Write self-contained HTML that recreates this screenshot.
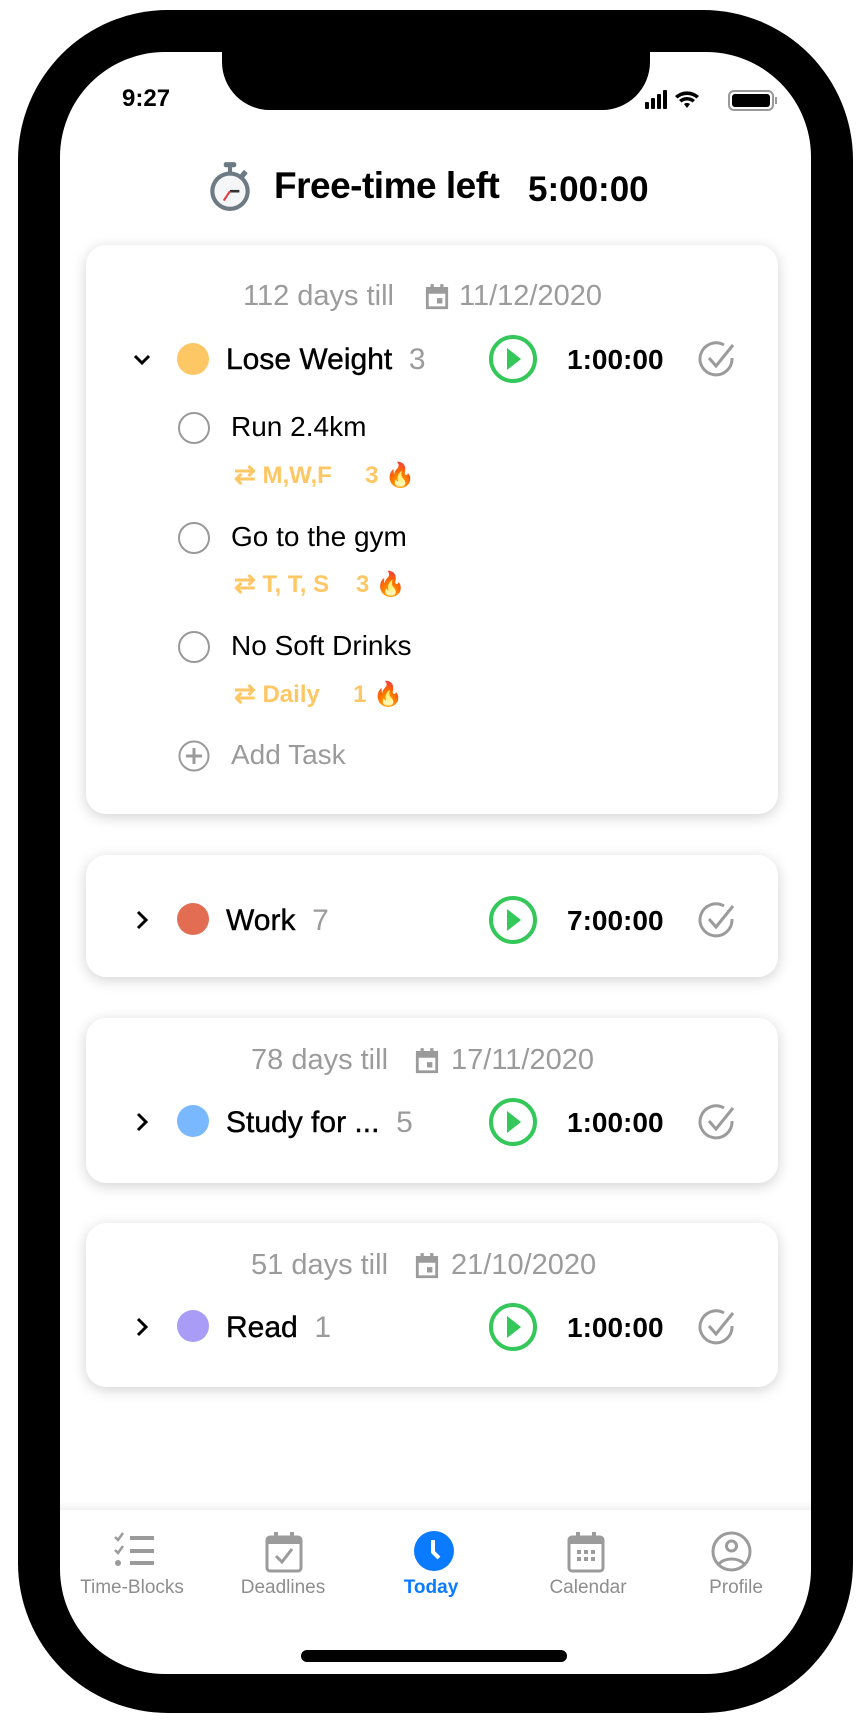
<!DOCTYPE html>
<html><head><meta charset="utf-8"><style>
*{margin:0;padding:0;box-sizing:border-box}
body{width:868px;height:1733px;background:#fff;position:relative;overflow:hidden;font-family:"Liberation Sans",Arial,sans-serif}
.a{position:absolute}
.phone{left:18px;top:10px;width:835px;height:1703px;background:#000;border-radius:150px}
.screen{left:60px;top:52px;width:751px;height:1622px;background:#fff;border-radius:105px;overflow:hidden}
.notch{left:222px;top:40px;width:428px;height:70px;background:#000;border-radius:0 0 48px 48px}
.card{left:86px;width:692px;background:#fff;border-radius:20px;box-shadow:0 3px 14px rgba(0,0,0,0.18)}
.date{color:#9b9b9b;font-size:29px;white-space:nowrap}
.row{font-size:30px;white-space:nowrap}
.name{color:#000;-webkit-text-stroke:0.4px #000}
.cnt{color:#9b9b9b}
.time{font-weight:bold;font-size:28px;color:#000}
.task{font-size:28px;color:#000}
.sub{font-size:24px;font-weight:bold;color:#fdc765;white-space:nowrap}
.dot{width:32px;height:32px;border-radius:50%}
.tc{width:32px;height:32px;border-radius:50%;border:2px solid #999}
.tab{font-size:19px;color:#8e8e8e;text-align:center;width:160px}
</style></head><body>
<div class="a phone"></div>
<div class="a screen"></div>
<div class="a notch" style="top:40px"></div>
<div class="a" style="left:122px;top:85px;font-size:24px;font-weight:bold">9:27</div>
<svg class="a" style="left:645px;top:88px" width="135" height="24" viewBox="0 0 135 24">
<rect x="0" y="14" width="4" height="7" rx="1"/><rect x="6" y="10" width="4" height="11" rx="1"/><rect x="12" y="6" width="4" height="15" rx="1"/><rect x="18" y="2" width="4" height="19" rx="1"/>
<path d="M42 20l-3-4a5 5 0 0 1 6 0z M34 12a12 12 0 0 1 16 0l-2.5 2.5a8.5 8.5 0 0 0-11 0z M30 8a18 18 0 0 1 24 0l-2.5 2.5a14.5 14.5 0 0 0-19 0z"/>
<rect x="84" y="3" width="44" height="19" rx="5" fill="none" stroke="#999" stroke-width="2"/><rect x="87" y="6" width="38" height="13" rx="3"/><rect x="130" y="9" width="2" height="7" fill="#999"/>
</svg>
<svg class="a" style="left:206px;top:160px" width="48" height="52" viewBox="0 0 44 50">
<rect x="16" y="2" width="12" height="5" rx="2" fill="#6d7a83"/><rect x="20" y="6" width="4" height="6" fill="#6d7a83"/>
<circle cx="22" cy="30" r="19" fill="#6d7a83"/><circle cx="22" cy="30" r="15" fill="#f4f6f7"/>
<path d="M22 30h9" stroke="#333" stroke-width="2.5"/><path d="M22 30l-6 9" stroke="#e23b3b" stroke-width="2"/>
<rect x="33" y="10" width="5" height="6" rx="1" fill="#6d7a83" transform="rotate(40 35 13)"/>
</svg>
<div class="a" style="left:274px;top:165px;font-size:37px;font-weight:bold;letter-spacing:-0.5px">Free-time left</div>
<div class="a" style="left:528px;top:170px;font-size:35px;font-weight:bold">5:00:00</div>

<div class="a card" style="top:245px;height:569px"></div>
<div class="a date" style="left:243px;top:280px">112 days till</div>
<svg class="a" style="left:424px;top:283px" width="26" height="28" viewBox="0 0 24 26"><path d="M3 5h18v18H3z" fill="none" stroke="#9b9b9b" stroke-width="2.6"/><path d="M3 5h18v5H3z M6 1h3v5H6z M15 1h3v5h-3z M12 14h5v5h-5z" fill="#9b9b9b"/></svg>
<div class="a date" style="left:459px;top:280px">11/12/2020</div>

<svg class="a" style="left:132px;top:352px" width="20" height="16" viewBox="0 0 20 16"><path d="M3 4l7 7 7-7" fill="none" stroke="#000" stroke-width="3"/></svg>

<div class="a dot" style="left:177px;top:343px;background:#fdc765"></div>
<div class="a row" style="left:226px;top:343px"><span class="name">Lose Weight</span>&nbsp;&nbsp;<span class="cnt">3</span></div>

<div class="a tc" style="left:178px;top:412px"></div>
<div class="a task" style="left:231px;top:411px">Run 2.4km</div>
<div class="a sub" style="left:234px;top:459px"><span style="font-size:26px">⇄</span>&nbsp;M,W,F&nbsp;&nbsp;&nbsp;&nbsp;&nbsp;3 <span style="color:#f08a10">🔥</span></div>
<div class="a tc" style="left:178px;top:522px"></div>
<div class="a task" style="left:231px;top:521px">Go to the gym</div>
<div class="a sub" style="left:234px;top:568px"><span style="font-size:26px">⇄</span>&nbsp;T, T, S&nbsp;&nbsp;&nbsp;&nbsp;3 <span style="color:#f08a10">🔥</span></div>
<div class="a tc" style="left:178px;top:631px"></div>
<div class="a task" style="left:231px;top:630px">No Soft Drinks</div>
<div class="a sub" style="left:234px;top:678px"><span style="font-size:26px">⇄</span>&nbsp;Daily&nbsp;&nbsp;&nbsp;&nbsp;&nbsp;1 <span style="color:#f08a10">🔥</span></div>
<svg class="a" style="left:178px;top:740px" width="32" height="32" viewBox="0 0 32 32"><circle cx="16" cy="16" r="14.5" fill="none" stroke="#9b9b9b" stroke-width="2"/><path d="M16 8v16M8 16h16" stroke="#9b9b9b" stroke-width="3"/></svg>
<div class="a task" style="left:231px;top:739px;color:#9b9b9b">Add Task</div>

<div class="a card" style="top:855px;height:122px"></div>
<svg class="a" style="left:134px;top:909px" width="16" height="22" viewBox="0 0 16 22"><path d="M4 3l8 8-8 8" fill="none" stroke="#000" stroke-width="3"/></svg>
<div class="a dot" style="left:177px;top:903px;background:#e26d52"></div>
<div class="a row" style="left:226px;top:904px"><span class="name">Work</span>&nbsp;&nbsp;<span class="cnt">7</span></div>

<div class="a card" style="top:1018px;height:165px"></div>
<div class="a date" style="left:251px;top:1044px">78 days till</div>
<svg class="a" style="left:414px;top:1047px" width="26" height="28" viewBox="0 0 24 26"><path d="M3 5h18v18H3z" fill="none" stroke="#9b9b9b" stroke-width="2.6"/><path d="M3 5h18v5H3z M6 1h3v5H6z M15 1h3v5h-3z M12 14h5v5h-5z" fill="#9b9b9b"/></svg>
<div class="a date" style="left:451px;top:1044px">17/11/2020</div>
<svg class="a" style="left:134px;top:1111px" width="16" height="22" viewBox="0 0 16 22"><path d="M4 3l8 8-8 8" fill="none" stroke="#000" stroke-width="3"/></svg>
<div class="a dot" style="left:177px;top:1105px;background:#79b8ff"></div>
<div class="a row" style="left:226px;top:1106px"><span class="name">Study for ...</span>&nbsp;&nbsp;<span class="cnt">5</span></div>

<div class="a card" style="top:1223px;height:164px"></div>
<div class="a date" style="left:251px;top:1249px">51 days till</div>
<svg class="a" style="left:414px;top:1252px" width="26" height="28" viewBox="0 0 24 26"><path d="M3 5h18v18H3z" fill="none" stroke="#9b9b9b" stroke-width="2.6"/><path d="M3 5h18v5H3z M6 1h3v5H6z M15 1h3v5h-3z M12 14h5v5h-5z" fill="#9b9b9b"/></svg>
<div class="a date" style="left:451px;top:1249px">21/10/2020</div>
<svg class="a" style="left:134px;top:1316px" width="16" height="22" viewBox="0 0 16 22"><path d="M4 3l8 8-8 8" fill="none" stroke="#000" stroke-width="3"/></svg>
<div class="a dot" style="left:177px;top:1310px;background:#a89cf6"></div>
<div class="a row" style="left:226px;top:1311px"><span class="name">Read</span>&nbsp;&nbsp;<span class="cnt">1</span></div>

<svg class="a" style="left:488px;top:334px" width="50" height="50" viewBox="0 0 50 50"><circle cx="25" cy="25" r="22" fill="none" stroke="#34c759" stroke-width="4"/><path d="M19 14l14 11-14 11z" fill="#34c759"/></svg>
<div class="a time" style="left:567px;top:344px">1:00:00</div>
<svg class="a" style="left:697px;top:338px" width="42" height="42" viewBox="0 0 42 42"><path d="M35 20a16 16 0 1 1-8-13" fill="none" stroke="#9b9b9b" stroke-width="3"/><path d="M12 20l7 8 17-21" fill="none" stroke="#9b9b9b" stroke-width="3"/></svg>

<svg class="a" style="left:488px;top:895px" width="50" height="50" viewBox="0 0 50 50"><circle cx="25" cy="25" r="22" fill="none" stroke="#34c759" stroke-width="4"/><path d="M19 14l14 11-14 11z" fill="#34c759"/></svg>
<div class="a time" style="left:567px;top:905px">7:00:00</div>
<svg class="a" style="left:697px;top:899px" width="42" height="42" viewBox="0 0 42 42"><path d="M35 20a16 16 0 1 1-8-13" fill="none" stroke="#9b9b9b" stroke-width="3"/><path d="M12 20l7 8 17-21" fill="none" stroke="#9b9b9b" stroke-width="3"/></svg>

<svg class="a" style="left:488px;top:1097px" width="50" height="50" viewBox="0 0 50 50"><circle cx="25" cy="25" r="22" fill="none" stroke="#34c759" stroke-width="4"/><path d="M19 14l14 11-14 11z" fill="#34c759"/></svg>
<div class="a time" style="left:567px;top:1107px">1:00:00</div>
<svg class="a" style="left:697px;top:1101px" width="42" height="42" viewBox="0 0 42 42"><path d="M35 20a16 16 0 1 1-8-13" fill="none" stroke="#9b9b9b" stroke-width="3"/><path d="M12 20l7 8 17-21" fill="none" stroke="#9b9b9b" stroke-width="3"/></svg>

<svg class="a" style="left:488px;top:1302px" width="50" height="50" viewBox="0 0 50 50"><circle cx="25" cy="25" r="22" fill="none" stroke="#34c759" stroke-width="4"/><path d="M19 14l14 11-14 11z" fill="#34c759"/></svg>
<div class="a time" style="left:567px;top:1312px">1:00:00</div>
<svg class="a" style="left:697px;top:1306px" width="42" height="42" viewBox="0 0 42 42"><path d="M35 20a16 16 0 1 1-8-13" fill="none" stroke="#9b9b9b" stroke-width="3"/><path d="M12 20l7 8 17-21" fill="none" stroke="#9b9b9b" stroke-width="3"/></svg>

<div class="a" style="left:60px;top:1502px;width:751px;height:8px;background:linear-gradient(#fff,#f2f2f2)"></div>
<svg class="a" style="left:113px;top:1532px" width="42" height="36" viewBox="0 0 42 36"><path d="M2 5l3 3 5-7 M2 18l3 3 5-7" fill="none" stroke="#9b9b9b" stroke-width="2.5"/><circle cx="5" cy="31" r="3" fill="#9b9b9b"/><rect x="17" y="4" width="24" height="4" fill="#9b9b9b"/><rect x="17" y="17" width="24" height="4" fill="#9b9b9b"/><rect x="17" y="29" width="24" height="4" fill="#9b9b9b"/></svg>
<svg class="a" style="left:265px;top:1531px" width="38" height="42" viewBox="0 0 38 42"><rect x="2" y="6" width="34" height="34" rx="3" fill="none" stroke="#9b9b9b" stroke-width="3"/><rect x="2" y="6" width="34" height="7" fill="#9b9b9b"/><rect x="9" y="1" width="4" height="8" fill="#9b9b9b"/><rect x="25" y="1" width="4" height="8" fill="#9b9b9b"/><path d="M11 25l6 6 10-13" fill="none" stroke="#9b9b9b" stroke-width="3"/></svg>
<svg class="a" style="left:414px;top:1531px" width="40" height="40" viewBox="0 0 40 40"><circle cx="20" cy="20" r="20" fill="#0a7aff"/><path d="M19 9v12l6 6" fill="none" stroke="#fff" stroke-width="4"/></svg>
<svg class="a" style="left:567px;top:1531px" width="38" height="42" viewBox="0 0 38 42"><rect x="2" y="6" width="34" height="34" rx="3" fill="none" stroke="#9b9b9b" stroke-width="3"/><rect x="2" y="6" width="34" height="7" fill="#9b9b9b"/><rect x="9" y="1" width="4" height="8" fill="#9b9b9b"/><rect x="25" y="1" width="4" height="8" fill="#9b9b9b"/><path d="M10 19h4v4h-4z M17 19h4v4h-4z M24 19h4v4h-4z M10 26h4v4h-4z M17 26h4v4h-4z M24 26h4v4h-4z" fill="#9b9b9b"/></svg>
<svg class="a" style="left:711px;top:1531px" width="41" height="41" viewBox="0 0 41 41"><circle cx="20.5" cy="20.5" r="18.5" fill="none" stroke="#9b9b9b" stroke-width="3"/><circle cx="20.5" cy="15" r="5" fill="none" stroke="#9b9b9b" stroke-width="3"/><path d="M8 33a14 9 0 0 1 25 0" fill="none" stroke="#9b9b9b" stroke-width="3"/></svg>
<div class="a tab" style="left:52px;top:1577px">Time-Blocks</div>
<div class="a tab" style="left:203px;top:1577px">Deadlines</div>
<div class="a tab" style="left:351px;top:1577px;color:#0a7aff;font-weight:bold">Today</div>
<div class="a tab" style="left:508px;top:1577px">Calendar</div>
<div class="a tab" style="left:656px;top:1577px">Profile</div>
<div class="a" style="left:301px;top:1650px;width:266px;height:12px;border-radius:6px;background:#000"></div>
</body></html>
